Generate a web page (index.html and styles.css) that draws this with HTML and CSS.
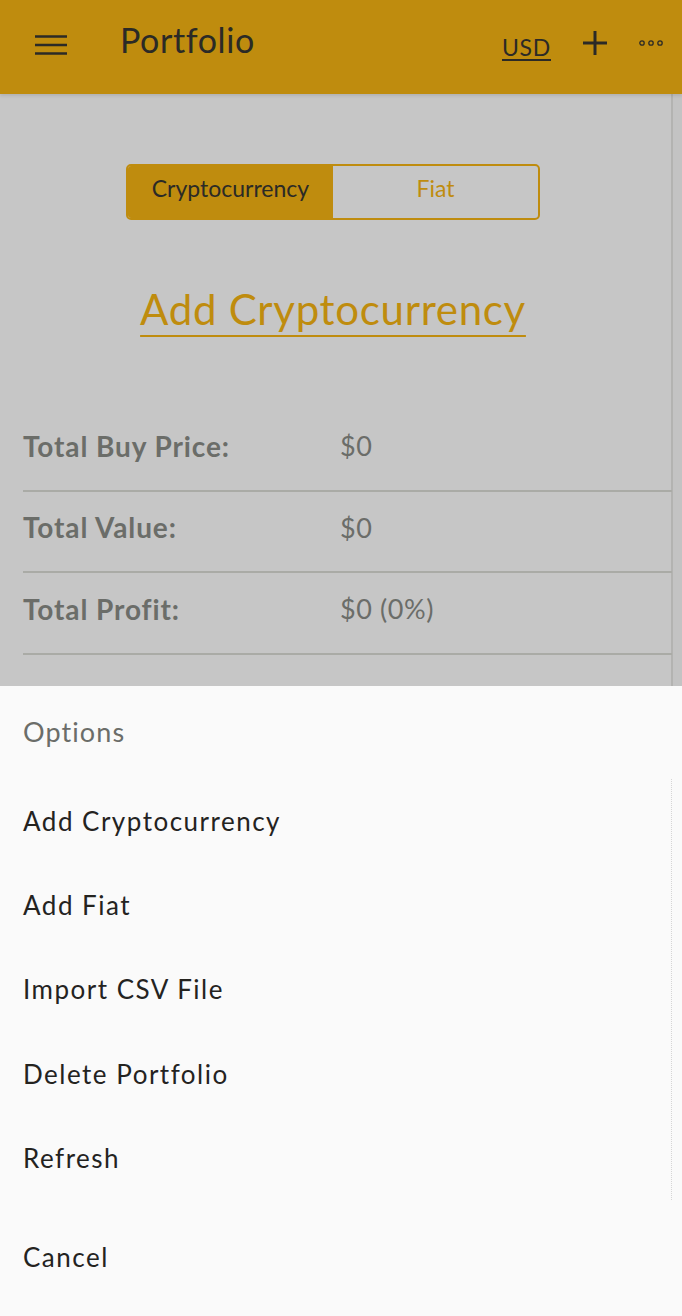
FILE: index.html
```html
<!DOCTYPE html>
<html lang="en">
<head>
<meta charset="utf-8">
<title>Portfolio</title>
<link rel="stylesheet" href="styles.css">
</head>
<body>
<div class="app">
  <header class="topbar">
    <button class="icon-btn menu" aria-label="Menu">
      <svg width="32" height="20" viewBox="0 0 32 20"><g stroke="#2b2a26" stroke-width="2.5"><line x1="0" y1="1.5" x2="32" y2="1.5"/><line x1="0" y1="10" x2="32" y2="10"/><line x1="0" y1="18.5" x2="32" y2="18.5"/></g></svg>
    </button>
    <h1 class="title">Portfolio</h1>
    <div class="actions">
      <span class="currency">USD</span>
      <button class="icon-btn plus" aria-label="Add">
        <svg width="24" height="24" viewBox="0 0 24 24"><g stroke="#2b2a26" stroke-width="3"><line x1="12" y1="0" x2="12" y2="24"/><line x1="0" y1="12" x2="24" y2="12"/></g></svg>
      </button>
      <button class="icon-btn more" aria-label="More">
        <svg width="24" height="6" viewBox="0 0 24 6"><g fill="none" stroke="#2b2a26" stroke-width="1.3"><circle cx="3" cy="3" r="2.2"/><circle cx="12" cy="3" r="2.2"/><circle cx="21" cy="3" r="2.2"/></g></svg>
      </button>
    </div>
  </header>

  <main class="content">
    <div class="segmented">
      <span class="seg active">Cryptocurrency</span>
      <span class="seg">Fiat</span>
    </div>
    <a class="add-link">Add Cryptocurrency</a>
    <div class="totals">
      <div class="row"><span class="label">Total Buy Price:</span><span class="value">$0</span></div>
      <div class="row"><span class="label">Total Value:</span><span class="value">$0</span></div>
      <div class="row"><span class="label">Total Profit:</span><span class="value">$0 (0%)</span></div>
    </div>
  </main>

  <section class="sheet">
    <div class="sheet-title">Options</div>
    <ul class="options">
      <li>Add Cryptocurrency</li>
      <li>Add Fiat</li>
      <li>Import CSV File</li>
      <li>Delete Portfolio</li>
      <li>Refresh</li>
    </ul>
    <div class="cancel">Cancel</div>
  </section>
</div>
</body>
</html>
```

FILE: styles.css
```css
* { box-sizing: border-box; }
html, body { margin: 0; padding: 0; }
body {
  font-family: "Lato", "Open Sans", sans-serif;
  background: #fafafa;
  color: #24231f;
}
.app {
  width: 682px;
  height: 1316px;
  display: flex;
  flex-direction: column;
  overflow: hidden;
}

/* ---------- top bar ---------- */
.topbar {
  height: 94px;
  flex: none;
  background: #bf8c0e;
  display: flex;
  align-items: center;
  padding: 0 19px 0 35px;
  box-shadow: 0 2px 3px rgba(0,0,0,0.10);
  position: relative;
  z-index: 1;
}
.icon-btn {
  background: none;
  border: 0;
  padding: 0;
  display: flex;
  align-items: center;
}
.menu { margin-bottom: 5px; }
.title {
  margin: 0 0 15px 53px;
  font-weight: 400;
  font-size: 34px;
  letter-spacing: 0.6px;
  color: #2b2a26;
}
.actions {
  margin-left: auto;
  display: flex;
  align-items: center;
}
.currency {
  font-size: 23px;
  letter-spacing: 0.7px;
  color: #2b2a26;
  text-decoration: underline;
  text-underline-offset: 3px;
  text-decoration-thickness: 2px;
  margin-bottom: 1px;
}
.plus { margin: 0 0 9px 32px; }
.more { margin: 0 0 9px 32px; }

/* ---------- main (dimmed) ---------- */
.content {
  height: 592px;
  flex: none;
  background: linear-gradient(to right, #c6c6c6 0, #c6c6c6 671px, #b3b3b1 671px, #b3b3b1 673px, #c3c3c3 673px);
  display: flex;
  flex-direction: column;
  align-items: center;
  padding: 70px 16px 0 0;
}
.segmented {
  display: flex;
  width: 414px;
  height: 56px;
  flex: none;
  border: 2px solid #bf8c0e;
  border-radius: 5px;
  overflow: hidden;
}
.seg {
  flex: 1;
  display: flex;
  align-items: center;
  justify-content: center;
  padding-bottom: 8px;
  font-size: 23px;
  color: #bf8c0e;
}
.seg.active {
  background: #bf8c0e;
  color: #2b2a26;
}
.add-link {
  margin-top: 64px;
  font-size: 42px;
  line-height: 50px;
  letter-spacing: 0.7px;
  color: #bf8c0e;
  text-decoration: underline;
  text-decoration-thickness: 2px;
  text-underline-offset: 10px;
}
.totals {
  align-self: stretch;
  margin: 76px -6px 0 23px;
}
.row {
  display: flex;
  align-items: center;
  height: 81.5px;
  border-bottom: 2px solid #aaaba6;
  padding-bottom: 8px;
  color: #6b6d69;
}
.label {
  width: 317px;
  font-size: 28px;
  font-weight: 700;
  letter-spacing: 0.9px;
}
.value {
  font-size: 27px;
  letter-spacing: 0.6px;
}

/* ---------- options sheet ---------- */
.sheet {
  flex: 1;
  background: #fafafa;
  padding: 0 0 0 23px;
}
.sheet-title {
  height: 92.5px;
  padding-top: 30px;
  font-size: 27px;
  line-height: 32px;
  letter-spacing: 1.1px;
  color: #6b6d69;
}
.options {
  list-style: none;
  margin: 0 10px 0 0;
  padding: 0;
  border-right: 1px dotted #d6d6d6;
}
.options li {
  height: 84.4px;
  font-size: 26px;
  letter-spacing: 1.5px;
  color: #24231f;
  display: flex;
  align-items: center;
}
.cancel {
  margin-top: 14px;
  height: 84.4px;
  font-size: 26px;
  letter-spacing: 1.5px;
  display: flex;
  align-items: center;
}
```
